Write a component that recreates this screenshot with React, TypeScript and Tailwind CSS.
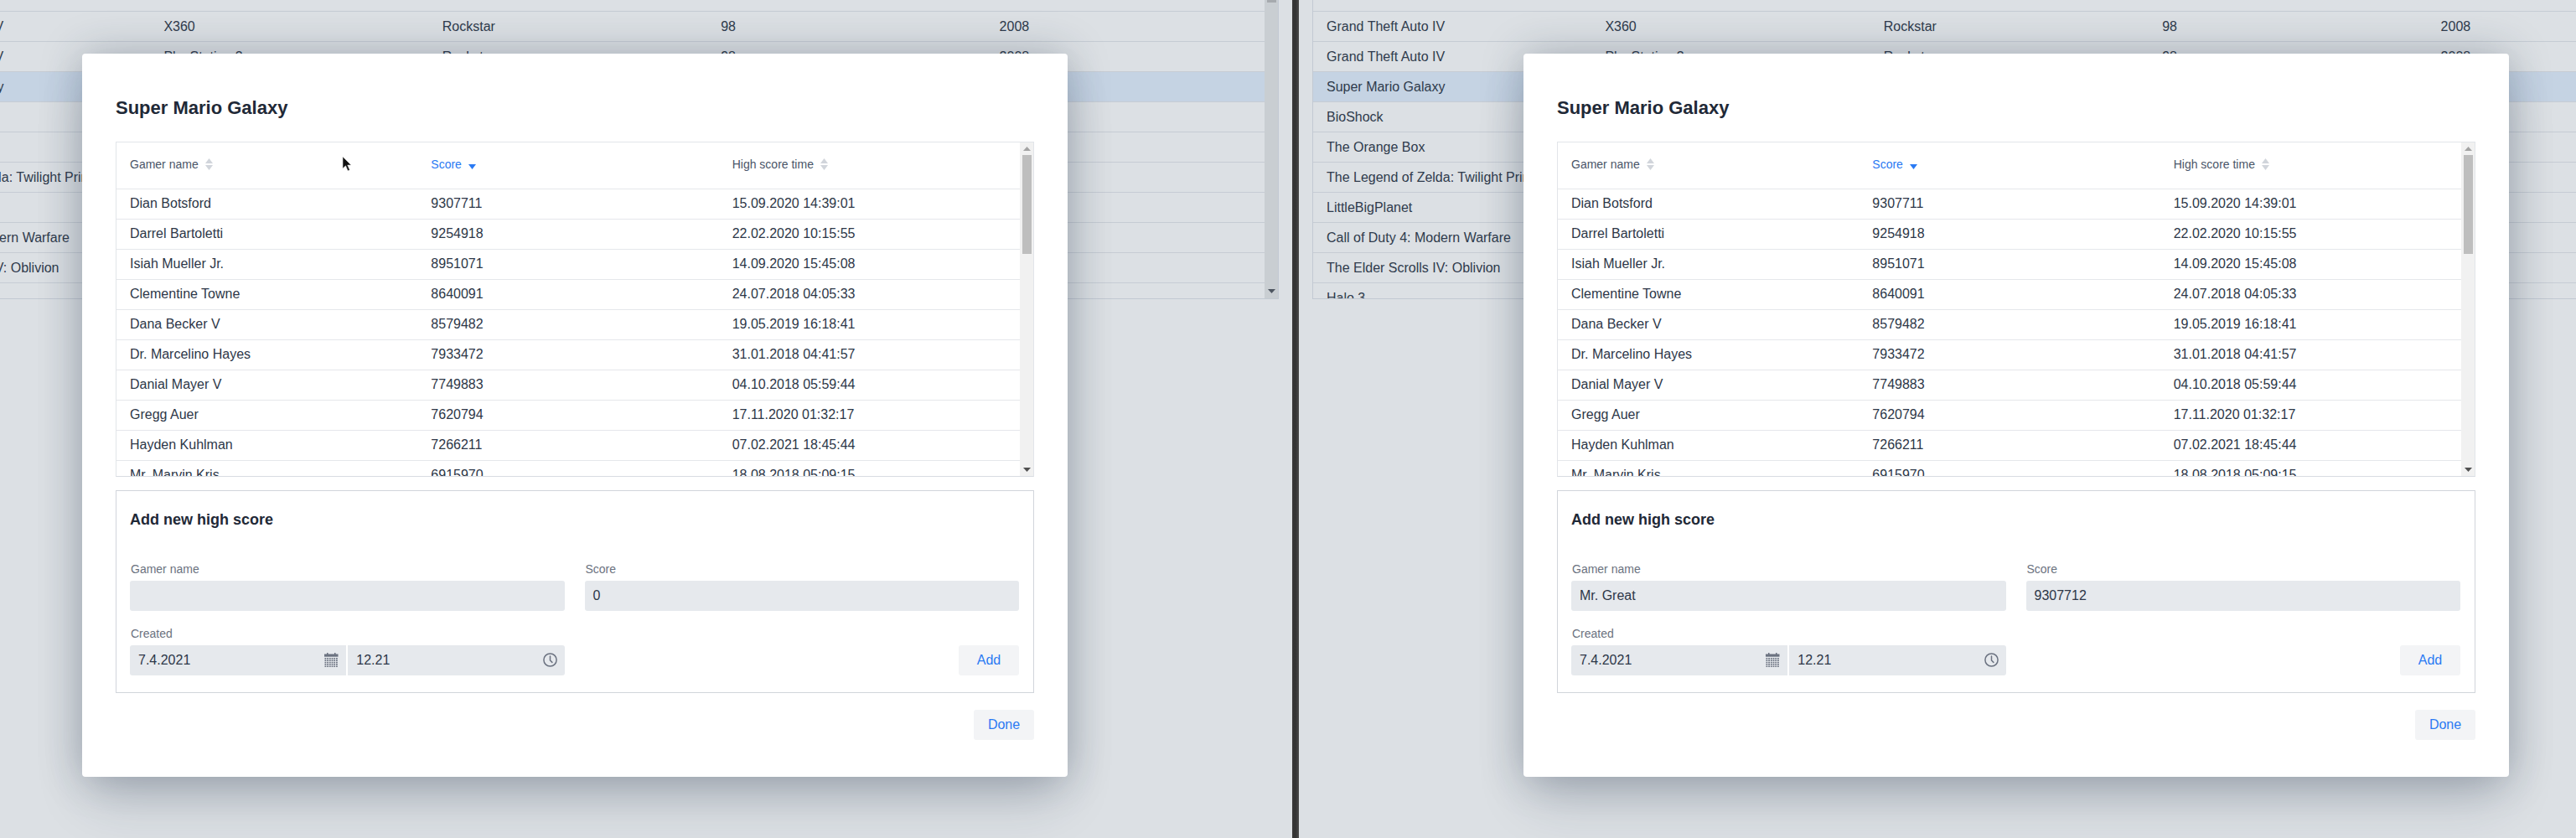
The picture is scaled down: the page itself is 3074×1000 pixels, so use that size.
import React from "react";

const games: [string, string, string, string, string][] = [
  ["Grand Theft Auto IV", "X360", "Rockstar", "98", "2008"],
  ["Grand Theft Auto IV", "PlayStation 3", "Rockstar", "98", "2008"],
  ["Super Mario Galaxy", "Wii", "Nintendo", "97", "2007"],
  ["BioShock", "X360", "2K Boston", "96", "2007"],
  ["The Orange Box", "X360", "Valve", "96", "2007"],
  ["The Legend of Zelda: Twilight Princess", "Wii", "Nintendo", "95", "2006"],
  ["LittleBigPlanet", "PlayStation 3", "Media Molecule", "95", "2008"],
  ["Call of Duty 4: Modern Warfare", "X360", "Infinity Ward", "94", "2007"],
  ["The Elder Scrolls IV: Oblivion", "X360", "Bethesda", "94", "2006"],
  ["Halo 3", "X360", "Bungie", "94", "2007"],
];

const scores: [string, string, string][] = [
  ["Dian Botsford", "9307711", "15.09.2020 14:39:01"],
  ["Darrel Bartoletti", "9254918", "22.02.2020 10:15:55"],
  ["Isiah Mueller Jr.", "8951071", "14.09.2020 15:45:08"],
  ["Clementine Towne", "8640091", "24.07.2018 04:05:33"],
  ["Dana Becker V", "8579482", "19.05.2019 16:18:41"],
  ["Dr. Marcelino Hayes", "7933472", "31.01.2018 04:41:57"],
  ["Danial Mayer V", "7749883", "04.10.2018 05:59:44"],
  ["Gregg Auer", "7620794", "17.11.2020 01:32:17"],
  ["Hayden Kuhlman", "7266211", "07.02.2021 18:45:44"],
  ["Mr. Marvin Kris", "6915970", "18.08.2018 05:09:15"],
];

function SortIcon() {
  return (
    <svg width="9" height="14" viewBox="0 0 9 14" className="ml-2 shrink-0">
      <path d="M4.5 0L9 6H0z" fill="#d1d5db" />
      <path d="M4.5 14L0 8h9z" fill="#d1d5db" />
    </svg>
  );
}

function CalendarIcon() {
  const dots: React.ReactNode[] = [];
  for (let r = 0; r < 5; r++) {
    for (let c = 0; c < 6; c++) {
      dots.push(<rect key={`${r}-${c}`} x={0.5 + c * 2.7} y={6 + r * 2.4} width="1.8" height="1.6" fill="#6b7280" />);
    }
  }
  return (
    <svg width="17" height="17" viewBox="0 0 17 17" className="shrink-0">
      <rect x="0" y="1.5" width="16.5" height="3.2" fill="#6b7280" />
      <rect x="3" y="0" width="1.5" height="2" fill="#6b7280" />
      <rect x="12" y="0" width="1.5" height="2" fill="#6b7280" />
      {dots}
    </svg>
  );
}

function ClockIcon() {
  return (
    <svg width="17" height="17" viewBox="0 0 17 17" fill="none" stroke="#6b7280" strokeWidth="1.5" className="shrink-0">
      <circle cx="8.5" cy="8.5" r="7.6" />
      <path d="M8.5 4v5l2.4 2.4" strokeLinecap="round" />
    </svg>
  );
}

function Field({ label, children }: { label: string; children: React.ReactNode }) {
  return (
    <div className="flex flex-col">
      <div className="h-5 mb-1 text-sm leading-5 text-[#6b7280] pl-px">{label}</div>
      {children}
    </div>
  );
}

function Input({ value }: { value: string }) {
  return <div className="h-9 rounded-[3px] bg-[#e6e9ed] px-2.5 text-base leading-[35px] text-[#2d3748]">{value}</div>;
}

function Modal({ name, score, className }: { name: string; score: string; className: string }) {
  return (
    <div className={`absolute top-16 w-[1176px] h-[863px] rounded bg-white p-10 shadow-[0_35px_60px_-10px_rgba(30,45,70,0.2),0_0_50px_0_rgba(30,45,70,0.28)] ${className}`}>
      <h2 className="h-[49px] mb-4 text-[22px] leading-[49px] font-bold text-[#1f2937]">Super Mario Galaxy</h2>
      <div className="flex h-[400px] overflow-hidden border border-[#e2e5e9] border-b-[#d8dce2]">
        <div className="flex-1 min-w-0">
          <div className="grid grid-cols-3 h-14 items-center border-b border-[#e5e7eb] pb-[3px] text-sm text-[#4a5568]">
            <div className="flex items-center px-4">Gamer name<SortIcon /></div>
            <div className="flex items-center px-4 text-[#2a7af3]">
              Score
              <svg width="9" height="6" viewBox="0 0 9 6" className="ml-2 mt-1.5 shrink-0">
                <path d="M0 0h9L4.5 6z" fill="#2a7af3" />
              </svg>
            </div>
            <div className="flex items-center px-4">High score time<SortIcon /></div>
          </div>
          {scores.map((s) => (
            <div key={s[0]} className="grid grid-cols-3 h-9 shrink-0 items-center border-b border-[#e5e7eb] pb-px text-base text-[#2d3748]">
              <div className="px-4">{s[0]}</div>
              <div className="px-4">{s[1]}</div>
              <div className="px-4">{s[2]}</div>
            </div>
          ))}
        </div>
        <div className="flex w-4 shrink-0 flex-col items-center bg-[#f1f1f1]">
          <svg width="9" height="5" viewBox="0 0 9 5" className="mt-[5px] mb-[5px] shrink-0">
            <path d="M4.5 0L9 5H0z" fill="#a3a3a3" />
          </svg>
          <div className="h-[118px] w-[11px] shrink-0 bg-[#bebebe]" />
          <div className="flex-1" />
          <svg width="9" height="5" viewBox="0 0 9 5" className="mb-[5px] shrink-0">
            <path d="M0 0h9L4.5 5z" fill="#505050" />
          </svg>
        </div>
      </div>
      <div className="mt-4 h-[242px] border border-[#d1d5db] py-4 pl-4 pr-[17px]">
        <h3 className="h-9 mb-[31px] text-lg leading-[37px] font-bold text-[#1f2937]">Add new high score</h3>
        <div className="grid grid-cols-2 gap-x-6 gap-y-[17px]">
          <Field label="Gamer name"><Input value={name} /></Field>
          <Field label="Score"><Input value={score} /></Field>
          <Field label="Created">
            <div className="flex gap-0.5">
              <div className="flex h-9 flex-1 items-center justify-between rounded-l-[3px] bg-[#e6e9ed] pb-px pl-2.5 pr-[9px] text-base text-[#2d3748]">
                <span>7.4.2021</span><CalendarIcon />
              </div>
              <div className="flex h-9 flex-1 items-center justify-between rounded-r-[3px] bg-[#e6e9ed] pb-px pl-2.5 pr-[9px] text-base text-[#2d3748]">
                <span>12.21</span><ClockIcon />
              </div>
            </div>
          </Field>
          <div className="flex items-end justify-end">
            <button className="h-9 w-[72px] rounded-[3px] bg-[#f3f4f6] pb-px text-base text-[#2a7af3]">Add</button>
          </div>
        </div>
      </div>
      <div className="mt-5 flex justify-end">
        <button className="h-9 w-[72px] rounded-[3px] bg-[#f3f4f6] pb-px text-base text-[#2a7af3]">Done</button>
      </div>
    </div>
  );
}

function Backdrop({ className }: { className: string }) {
  return (
    <div className={`flex h-[379px] w-[1680px] shrink-0 -mt-[22px] overflow-hidden border-x border-b border-[#c2c9d2] ${className}`}>
      <div className="flex-1 min-w-0">
        <div className="h-9 border-b border-[#c6ccd4]" />
        {games.map((g, i) => (
          <div
            key={i}
            className={`grid grid-cols-5 h-9 items-center border-b border-[#c6ccd4] text-base text-[#2f3b4c] ${i === 2 ? "bg-[#c5d3e3]" : ""}`}
          >
            {g.map((v, j) => (
              <div key={j} className="px-4 whitespace-nowrap">{v}</div>
            ))}
          </div>
        ))}
      </div>
      <div className="flex w-4 shrink-0 flex-col items-center bg-[#c9ced2]">
        <div className="h-[25px] w-[11px] shrink-0 bg-[#a6aaae]" />
        <div className="flex-1" />
        <svg width="9" height="5" viewBox="0 0 9 5" className="mb-[6px] shrink-0">
          <path d="M0 0h9L4.5 5z" fill="#4d5560" />
        </svg>
      </div>
    </div>
  );
}

export default function App() {
  return (
    <div className="relative flex h-[1000px] w-[3074px] overflow-hidden bg-[#dce0e4] font-['Liberation_Sans',Arial,sans-serif]">
      <div className="relative h-full w-[1542px] shrink-0 overflow-hidden">
        <Backdrop className="-ml-[154px]" />
        <Modal name="" score="0" className="left-[98px]" />
      </div>
      <div className="h-full w-2 shrink-0 bg-linear-to-r from-[#383838] via-[#333333] to-[#4a4a4a]" />
      <div className="relative h-full flex-1 overflow-hidden">
        <Backdrop className="ml-4" />
        <Modal name="Mr. Great" score="9307712" className="left-[268px]" />
      </div>
      <svg width="13" height="20" viewBox="0 0 13 20" className="absolute left-[408px] top-[186px]">
        <path d="M1 1v14l3.5-3.2 2.6 6 2.2-1-2.6-5.8H11z" fill="#111" stroke="#d8d8d8" strokeWidth="0.6" />
      </svg>
    </div>
  );
}
